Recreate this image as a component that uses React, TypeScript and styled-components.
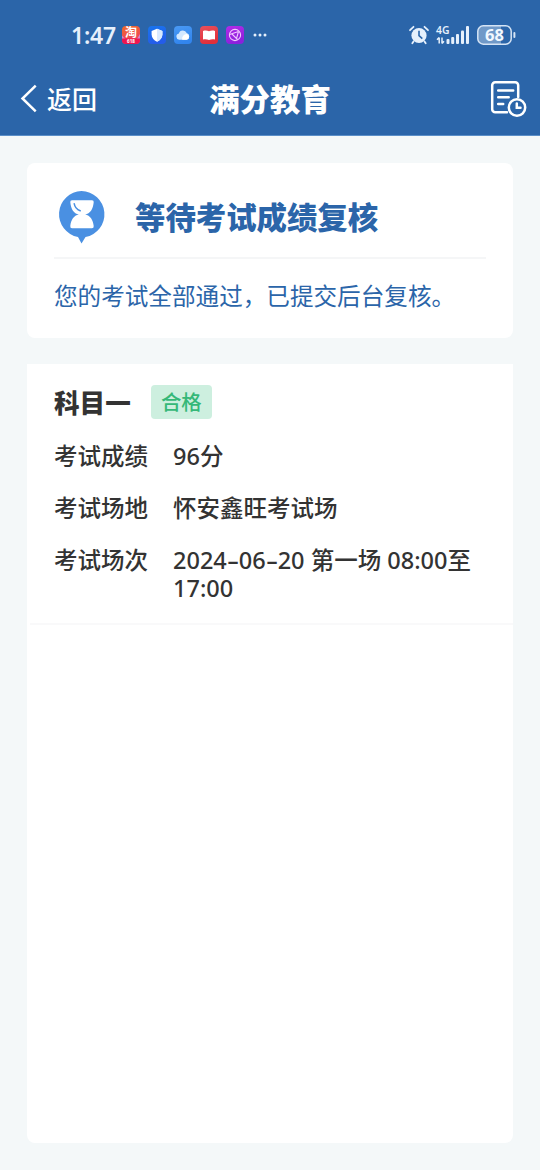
import React from 'react'
import styled, { createGlobalStyle } from 'styled-components'

const GlobalStyle = createGlobalStyle`
  * {
    box-sizing: border-box;
  }
  body {
    margin: 0;
    background: #f4f8f9;
    color: #333;
    font-family: 'Noto Sans', 'Noto Sans CJK SC', sans-serif;
  }
  svg {
    flex: none;
    overflow: visible;
  }
`

const Page = styled.div`
  height: 1170px;
  display: flex;
  flex-direction: column;
`

const Header = styled.header`
  height: 136px;
  flex: none;
  background: #2b65a9;
  border-bottom: 1px solid #5b8fc8;
  color: #fff;
`

const StatusBar = styled.div`
  height: 70px;
  padding: 0 24px 0 71px;
  display: flex;
  align-items: center;
  justify-content: space-between;
  color: #e6f0fc;
`

const StatusGroup = styled.div<{ $gap: number }>`
  display: flex;
  align-items: center;
  gap: ${({ $gap }) => $gap}px;
`

const Clock = styled.span`
  width: 43px;
  font: 600 23px/30px 'Noto Sans', sans-serif;
  letter-spacing: -0.2px;
  white-space: nowrap;
`

const NavBar = styled.nav`
  height: 58px;
  padding: 0 13px 0 20px;
  display: grid;
  grid-template-columns: 1fr auto 1fr;
  align-items: center;
`

const BackButton = styled.a`
  display: flex;
  align-items: center;
  gap: 10px;
  font: 500 25px/36px 'Noto Sans CJK SC', sans-serif;
`

const BackLabel = styled.span`
  margin-top: -3px;
`

const NavTitle = styled.h1`
  margin: -2px 0 0 -7px;
  font: 900 30.4px/40px 'Noto Sans CJK SC', sans-serif;
`

const NavAction = styled.div`
  display: flex;
  justify-content: flex-end;
  padding-bottom: 1px;
`

const Content = styled.main`
  flex: 1;
  padding: 27px 27px;
  display: flex;
  flex-direction: column;
  gap: 26px;
`

const Card = styled.section`
  background: #fff;
  border-radius: 8px;
`

const NoticeCard = styled(Card)`
  height: 175px;
  padding: 0 27px;
  color: #2b65a9;
`

const NoticeHead = styled.div`
  height: 96px;
  padding: 28px 0 0 4px;
  display: flex;
  align-items: flex-start;
  gap: 30px;
  border-bottom: 2px solid #f5f6f7;
`

const NoticeTitle = styled.h2`
  margin: 5px 0 0;
  font: 900 30.4px/40px 'Noto Sans CJK SC', sans-serif;
`

const NoticeText = styled.p`
  margin: 19px 0 0;
  font: 400 23.6px/34px 'Noto Sans CJK SC', sans-serif;
  white-space: nowrap;
`

const ResultCard = styled(Card)`
  flex: 1;
  border-radius: 0 0 8px 8px;
`

const Subject = styled.div`
  height: 261px;
  margin-left: 3px;
  padding: 21px 24px 0;
  border-bottom: 2px solid #f9f9fa;
`

const SubjectHead = styled.div`
  display: flex;
  align-items: center;
  gap: 20px;
  height: 34px;
`

const SubjectName = styled.h3`
  margin: 0;
  font: 900 25.6px/34px 'Noto Sans CJK SC', sans-serif;
`

const PassTag = styled.span`
  width: 61px;
  height: 34px;
  border-radius: 4px;
  background: #cdefdf;
  color: #35b878;
  font: 500 20.4px/32px 'Noto Sans CJK SC', sans-serif;
  text-align: center;
`

const Row = styled.div`
  display: grid;
  grid-template-columns: 119px 1fr;
  margin-top: 24px;
  font-size: 23.5px;
  font-weight: 500;
  line-height: 28px;

  ${SubjectHead} + & {
    margin-top: 23px;
  }
`

const Dash = styled.span`
  display: inline-block;
  width: 12px;
  text-align: center;
  transform: scaleX(1.6);
`

const rows = [
  { label: '考试成绩', value: '96分' },
  { label: '考试场地', value: '怀安鑫旺考试场' },
  {
    label: '考试场次',
    value: (
      <>
        2024<Dash>-</Dash>06<Dash>-</Dash>20 第一场 08:00至
        <br />
        17:00
      </>
    ),
  },
]

const AppTile: React.FC<{ from: string; to: string; children: React.ReactNode }> = ({ from, to, children }) => {
  const id = `tile-${from.slice(1)}`
  return (
    <svg width="18" height="18" viewBox="0 0 18 18">
      <defs>
        <linearGradient id={id} x1="0" y1="0" x2="0.3" y2="1">
          <stop stopColor={from} />
          <stop offset="1" stopColor={to} />
        </linearGradient>
      </defs>
      <rect width="18" height="18" rx="4" fill={`url(#${id})`} />
      {children}
    </svg>
  )
}

const NotificationIcons = () => (
  <>
    <AppTile from="#ef6b28" to="#ee3f62">
      <path d="M0 9.5 3 13H0ZM18 8l-3 5h3Z" fill="#cf83cf" />
      <path d="M0 12.5h18V14a4 4 0 0 1-4 4H4a4 4 0 0 1-4-4Z" fill="#ef1650" />
      <text x="9" y="11.4" fontSize="12" fontWeight="700" fill="#fff" textAnchor="middle" fontFamily="Noto Sans CJK SC">
        淘
      </text>
      <text x="9" y="17" fontSize="4.6" fontWeight="700" fill="#fff" textAnchor="middle" fontFamily="Noto Sans">
        618
      </text>
    </AppTile>
    <AppTile from="#1875ee" to="#245cea">
      <path d="M9 2.8 14.4 5v3.6c0 3.4-2.2 5.8-5.4 7.2-3.2-1.4-5.4-3.8-5.4-7.2V5Z" fill="#fff" />
      <path d="M9 2.8 14.4 5v3.6c0 3.4-2.2 5.8-5.4 7.2Z" fill="#d8e9ff" />
    </AppTile>
    <AppTile from="#4a9af5" to="#3285ee">
      <path d="M5.2 13.8a3.2 3.2 0 0 1-.3-6.3 4.1 4.1 0 0 1 7.8-.5 3.5 3.5 0 0 1-.2 6.8Z" fill="#d3e8ff" />
      <path d="M8.2 13.8a5 5 0 0 1 4.5-5.9 3 3 0 0 1-.2 5.9Z" fill="#fff" />
    </AppTile>
    <AppTile from="#e8505a" to="#e22f3b">
      <path d="M3 5c2-.8 4.3-.6 6 .3 1.700-.9 4-1.100 6-.3v8.600c-2-.5-4.200-.3-6 .5-1.800-.8-4-1-6-.5Z" fill="#fff" />
    </AppTile>
    <AppTile from="#b22be8" to="#8b20dc">
      <g fill="none" stroke="#f0c8ff" strokeWidth="1.1">
        <circle cx="9" cy="9" r="5.6" />
        <path d="M3.600 8.500 12.500 5.500M6 8l5.500 5.500M12.500 5.500 10.500 12.500" />
      </g>
    </AppTile>
    <svg width="14" height="18" viewBox="0 0 14 18" fill="#e6f0fc">
      <circle cx="3" cy="9" r="1.5" />
      <circle cx="8" cy="9" r="1.5" />
      <circle cx="13" cy="9" r="1.5" />
    </svg>
  </>
)

const AlarmIcon = () => (
  <svg width="20" height="20" viewBox="0 0 20 20">
    <circle cx="10" cy="10.5" r="7.6" fill="#e6f0fc" />
    <path
      d="M1 5.2 4.500 1.800M19 5.200l-3.500-3.400M4.500 16.500 3.300 18.300M15.500 16.500l1.200 1.800"
      stroke="#e6f0fc"
      strokeWidth="1.8"
      strokeLinecap="round"
    />
    <path d="M10 5.8v4.900l3.300 3" stroke="#2b65a9" strokeWidth="1.6" fill="none" />
  </svg>
)

const SignalIcon = () => (
  <svg width="34" height="22" viewBox="0 0 34 22" fill="#e6f0fc">
    <text x="0" y="10" fontSize="11.5" fontWeight="600" fontFamily="Noto Sans" textLength="13.5" lengthAdjust="spacingAndGlyphs">
      4G
    </text>
    <path d="M3.200 19.500v-6M3.200 13.500 1 15.800M6 13.500v6M6 19.500l2-2.300" stroke="#e6f0fc" strokeWidth="1.5" fill="none" />
    <rect x="10.5" y="15" width="3" height="5" rx="1" />
    <rect x="15.2" y="13" width="3" height="7" rx="1" />
    <rect x="20" y="10" width="3" height="10" rx="1" />
    <rect x="25" y="6.5" width="3" height="13.5" rx="1" />
    <rect x="30" y="2" width="3" height="18" rx="1" />
  </svg>
)

const BatteryIcon = () => (
  <svg width="39" height="20" viewBox="0 0 39 20">
    <path d="M6 .8h18v18.4H6A5 5 0 0 1 .8 14V6A5 5 0 0 1 6 .8Z" fill="#7099c8" />
    <rect x=".8" y=".8" width="33.4" height="18.4" rx="5.5" fill="none" stroke="#d5e4f5" strokeWidth="1.5" />
    <path d="M37.400 8v4" stroke="#d5e4f5" strokeWidth="2" strokeLinecap="round" />
    <text x="17.5" y="16" fontSize="16.5" fontWeight="700" fontFamily="Noto Sans" fill="#f2f8ff" textAnchor="middle">
      68
    </text>
  </svg>
)

const BackIcon = () => (
  <svg width="17" height="30" viewBox="0 0 17 30" fill="none" stroke="#fff" strokeWidth="2.5">
    <path d="M15.700 1.600 2.500 14.500l13.200 12.900" />
  </svg>
)

const RecordIcon = () => (
  <svg width="37" height="38" viewBox="0 0 37 38" fill="none" stroke="#fff" strokeWidth="2.5" strokeLinecap="round">
    <path d="M17 32.200H5.200a3 3 0 0 1-3-3V5.200a3 3 0 0 1 3-3h20a3 3 0 0 1 3 3V17" />
    <path d="M8.200 10.500h15M8.200 17.300h10.500M8.200 24h5" />
    <circle cx="27" cy="27.500" r="8.2" />
    <path d="M26.800 23.500v4.300h3.700" />
  </svg>
)

const HourglassIcon = () => (
  <svg width="47" height="53" viewBox="0 0 47 53">
    <path d="M23.500 0a23.200 23.200 0 0 1 4 46L23.500 52.500 20 46A23.200 23.200 0 0 1 23.500 0Z" fill="#4a90e2" />
    <path
      d="M14 9.200h20q2 0 1.700 2c-.7 7-3.500 11.300-8.500 12.400 5 1 7.900 5.500 8.500 11.400q.2 2.200-1.700 2.200H14q-2 0-1.700-2.200c.6-5.900 3.500-10.400 8.500-11.400-5-1.100-7.800-5.400-8.500-12.400q-.3-2 1.700-2Z"
      fill="#fff"
    />
    <path d="M16.200 12.700c.6 3.500 2.500 5.800 6 7" fill="none" stroke="#4a90e2" strokeWidth="1.5" strokeLinecap="round" />
  </svg>
)

const App: React.FC = () => (
  <Page>
    <GlobalStyle />
    <Header>
      <StatusBar>
        <StatusGroup $gap={8}>
          <Clock>1:47</Clock>
          <NotificationIcons />
        </StatusGroup>
        <StatusGroup $gap={7}>
          <AlarmIcon />
          <SignalIcon />
          <BatteryIcon />
        </StatusGroup>
      </StatusBar>
      <NavBar>
        <BackButton>
          <BackIcon />
          <BackLabel>返回</BackLabel>
        </BackButton>
        <NavTitle>满分教育</NavTitle>
        <NavAction>
          <RecordIcon />
        </NavAction>
      </NavBar>
    </Header>
    <Content>
      <NoticeCard>
        <NoticeHead>
          <HourglassIcon />
          <NoticeTitle>等待考试成绩复核</NoticeTitle>
        </NoticeHead>
        <NoticeText>您的考试全部通过，已提交后台复核。</NoticeText>
      </NoticeCard>
      <ResultCard>
        <Subject>
          <SubjectHead>
            <SubjectName>科目一</SubjectName>
            <PassTag>合格</PassTag>
          </SubjectHead>
          {rows.map(({ label, value }) => (
            <Row key={label}>
              <span>{label}</span>
              <span>{value}</span>
            </Row>
          ))}
        </Subject>
      </ResultCard>
    </Content>
  </Page>
)

export default App
